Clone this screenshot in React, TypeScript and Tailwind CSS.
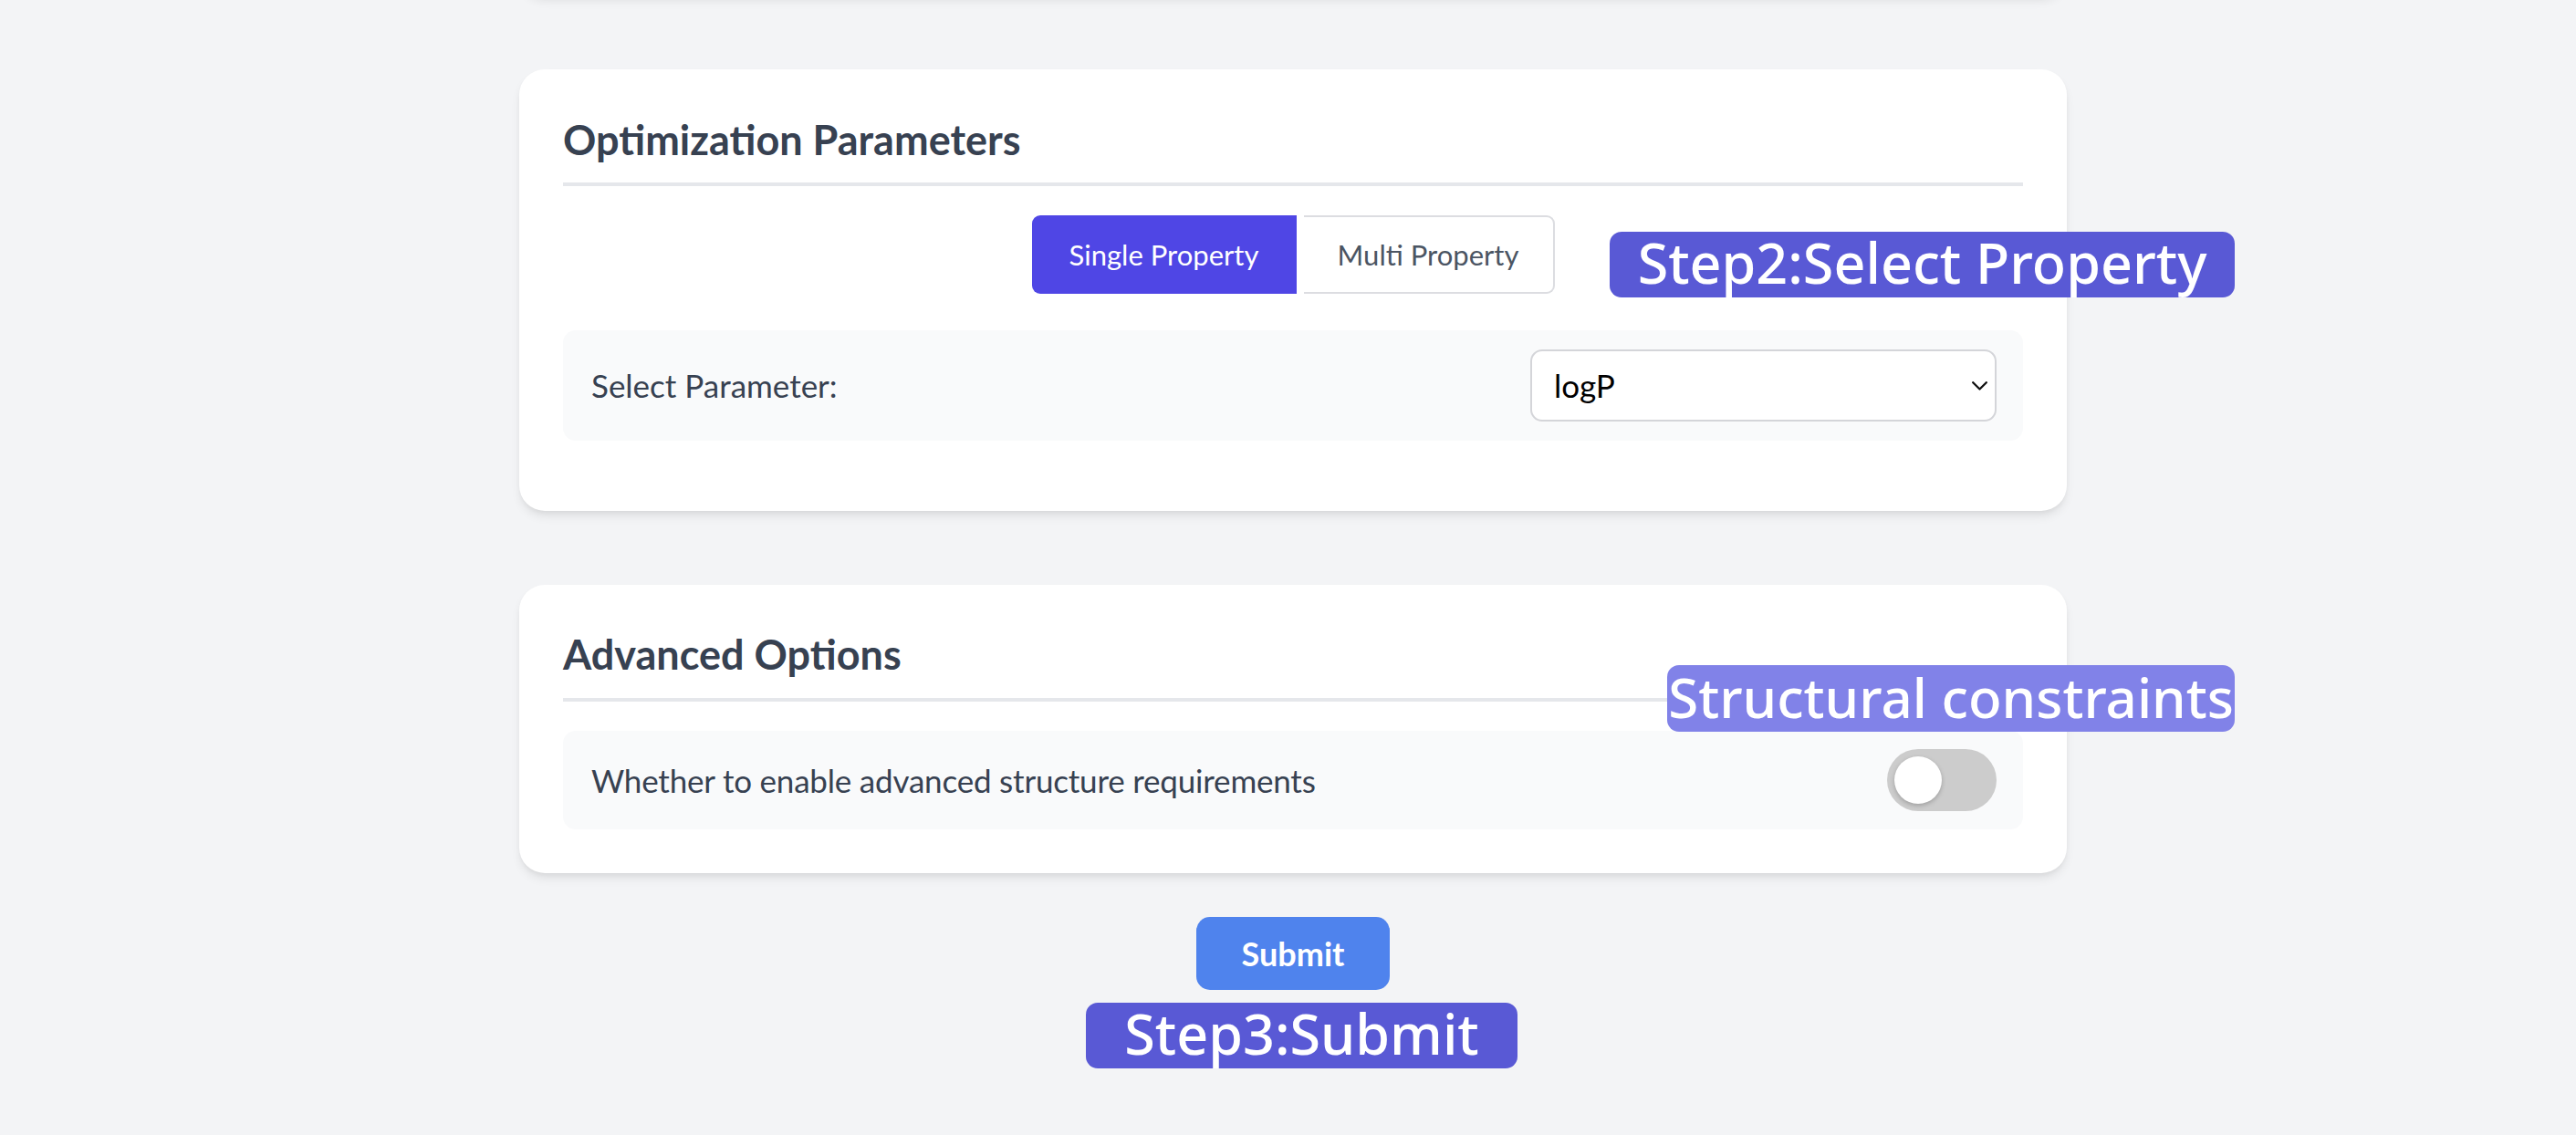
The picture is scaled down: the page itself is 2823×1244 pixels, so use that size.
import React from "react";

const cardShadow =
  "shadow-[0_7px_12px_-2px_rgba(0,0,0,0.09),0_3px_7px_-3px_rgba(0,0,0,0.08)]";

function Badge({
  text,
  className,
}: {
  text: string;
  className: string;
}) {
  return (
    <div
      className={`absolute flex items-center justify-center whitespace-nowrap rounded-[13px] pb-[4px] font-['Noto_Sans',sans-serif] font-medium text-white ${className}`}
    >
      {text}
    </div>
  );
}

export default function App() {
  return (
    <div className="relative h-[1244px] w-full overflow-hidden bg-[#f3f4f6] font-['Lato',sans-serif]">
      <div className="flex flex-col items-center pl-[11px]">
        {/* previous card (only its shadow is visible) */}
        <div className={`-mt-[205px] h-[200px] w-[1696px] rounded-[28px] bg-white ${cardShadow}`} />

        {/* Optimization Parameters */}
        <section
          className={`mt-[81px] w-[1696px] rounded-[28px] bg-white px-[48px] pt-[47px] pb-[77px] ${cardShadow}`}
        >
          <h2 className="border-b-4 border-[#e5e7eb] pb-[17px] text-[45px] font-bold leading-[60px] text-[#374151]">
            Optimization Parameters
          </h2>
          <div className="mt-[32px] flex justify-center gap-[8px]">
            <button className="h-[86px] w-[290px] rounded-l-[9px] bg-[#4f46e5] text-[31px] text-white">
              Single Property
            </button>
            <button className="h-[86px] w-[275px] rounded-r-[9px] border-2 border-l-0 border-[#dcdde1] bg-white text-[31px] text-[#4b5563]">
              Multi Property
            </button>
          </div>
          <div className="mt-[40px] flex items-center justify-between rounded-[14px] bg-[#f9fafb] py-[21px] pl-[31px] pr-[29px]">
            <span className="text-[35px] text-[#374151]">Select Parameter:</span>
            <div className="flex h-[79px] w-[511px] items-center justify-between rounded-[13px] border-2 border-[#d4d5d9] bg-white pl-[24px] pr-[8px]">
              <span className="text-[35px] text-black">logP</span>
              <svg width="17" height="10" viewBox="0 0 17 10" fill="none">
                <path
                  d="M1.2 1.2 L8.5 8.5 L15.8 1.2"
                  stroke="#111"
                  strokeWidth="2.3"
                  strokeLinecap="round"
                  strokeLinejoin="round"
                />
              </svg>
            </div>
          </div>
        </section>

        {/* Advanced Options */}
        <section
          className={`mt-[81px] w-[1696px] rounded-[28px] bg-white px-[48px] pt-[46px] pb-[48px] ${cardShadow}`}
        >
          <h2 className="border-b-4 border-[#e5e7eb] pb-[18px] text-[45px] font-bold leading-[60px] text-[#374151]">
            Advanced Options
          </h2>
          <div className="mt-[32px] flex items-center justify-between rounded-[14px] bg-[#f9fafb] py-[20px] pl-[31px] pr-[29px]">
            <span className="text-[35px] tracking-[-0.2px] text-[#374151]">
              Whether to enable advanced structure requirements
            </span>
            <div className="flex h-[68px] w-[120px] items-center rounded-full bg-[#cccccc] p-[8px]">
              <div className="h-[52px] w-[52px] rounded-full bg-white shadow-[0_2px_5px_rgba(0,0,0,0.22)]" />
            </div>
          </div>
        </section>

        <button className="mt-[48px] h-[80px] w-[212px] rounded-[15px] bg-[#4f83ed] text-[36px] font-bold text-white">
          Submit
        </button>
      </div>

      <Badge
        text="Step2:Select Property"
        className="left-[1764px] top-[254px] h-[72px] w-[685px] bg-[#5959d5] text-[61px]"
      />
      <Badge
        text="Structural constraints"
        className="left-[1827px] top-[729px] h-[73px] w-[622px] bg-[#8182e8] text-[60px]"
      />
      <Badge
        text="Step3:Submit"
        className="left-[1190px] top-[1099px] h-[72px] w-[473px] bg-[#5959d5] text-[61px]"
      />
    </div>
  );
}
